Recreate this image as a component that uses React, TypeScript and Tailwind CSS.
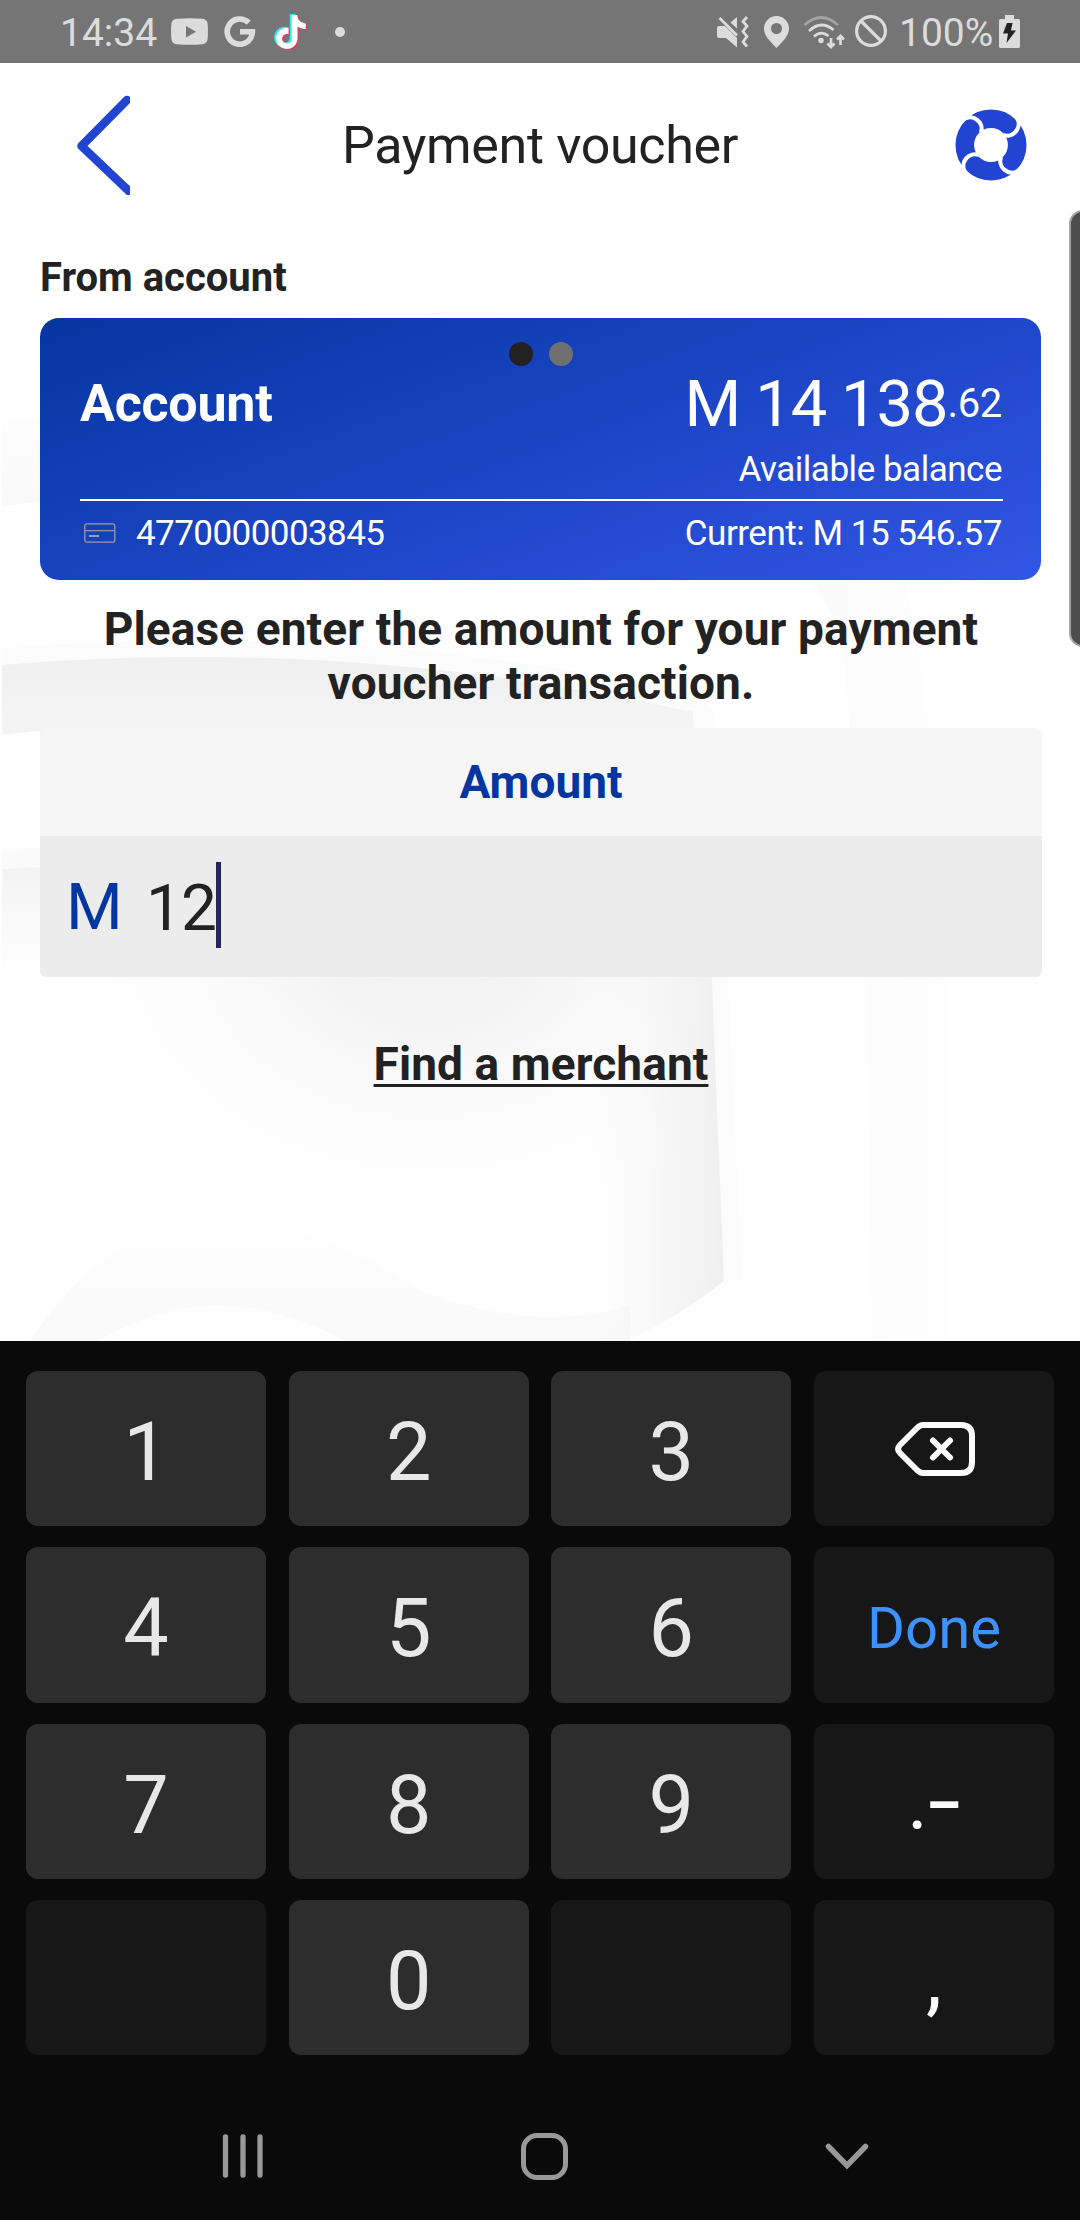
import React from "react";
import { SiTiktok } from "react-icons/si";

function StatusBar() {
  return (
    <div className="flex h-[63px] w-full items-center bg-[#757575] pl-[60px] text-[39px] leading-[63px] text-[#dcdcdc]">
      <span className="w-[111px] pt-[3px]">14:34</span>
      <svg className="h-[27px] w-[37px]" viewBox="0 0 37 27">
        <path fill="#dcdcdc" fillRule="evenodd" d="M6 .8Q18.500-.4 31 .8 36.200 1.200 36.600 6 37.300 13.500 36.600 21 36.200 25.800 31 26.200 18.500 27.400 6 26.200.8 25.800.4 21-.3 13.500.4 6 .8 1.200 6 .8ZM15 8v11.500l10-5.700Z" />
      </svg>
      <svg className="ml-4 h-[31px] w-[32px]" viewBox="0 0 32 31">
        <path fill="none" stroke="#dcdcdc" strokeWidth="5.600" d="M24.700 6.700A12.600 12.600 0 1 0 28.400 15.800H16" />
      </svg>
      <div className="relative ml-[18px] h-[36px] w-[32px]">
        <SiTiktok className="absolute left-[-2px] top-0 size-[34px] text-[#25f4ee]" />
        <SiTiktok className="absolute left-px top-[2px] size-[34px] text-[#fe2c55]" />
        <SiTiktok className="absolute left-[-0.500px] top-px size-[34px] text-white" />
      </div>
      <div className="ml-[29px] size-[10px] rounded-full bg-[#dcdcdc]" />

      <svg className="ml-[372px] h-[32px] w-[32px]" viewBox="0 0 32 32">
        <path fill="#dcdcdc" d="M2 10h6l12 12v9.500L9 22H2Q0 22 0 20v-8q0-2 2-2ZM20 1v11.500L13.500 6.500Z" />
        <path fill="none" stroke="#dcdcdc" strokeWidth="2.800" d="M2.500 2 20 19.500M30 1l-4 4.500 4 4.500-4 5.500 4 5-4 5.500 4 4.500" />
      </svg>
      <svg className="ml-[15px] h-[32px] w-[25px]" viewBox="0 0 25 32">
        <path fill="#dcdcdc" fillRule="evenodd" d="M12.500 0A12.500 12.500 0 0 0 0 12.500C0 20 6 25 12.500 32 19 25 25 20 25 12.500A12.500 12.500 0 0 0 12.500 0Zm0 7a5.500 5.500 0 1 1 0 11 5.500 5.500 0 0 1 0-11Z" />
      </svg>
      <svg className="ml-[14px] h-[34px] w-[43px]" viewBox="0 0 43 34">
        <g fill="none" stroke="#dcdcdc" strokeWidth="2.700">
          <path stroke="#a3a3a3" d="M1.500 10Q18 -5 35 10" />
          <path d="M6 16Q18 4.500 30.500 15M11 21.500q7-6.500 14.500-.5" />
          <path d="M28 23v9M24.500 28.500l3.500 3.500 3.500-3.500M37.500 30v-9M34 24.500l3.500-3.500 3.500 3.500" />
        </g>
        <circle cx="18" cy="25.500" r="2.700" fill="#dcdcdc" />
      </svg>
      <svg className="mb-[2px] ml-[8px] h-[34px] w-[34px]" viewBox="0 0 34 34">
        <circle cx="17" cy="17" r="14.400" fill="none" stroke="#dcdcdc" strokeWidth="3.200" />
        <path stroke="#dcdcdc" strokeWidth="3.200" d="m7 7 20 20" />
      </svg>
      <span className="ml-[11px] w-[100px] pt-[3px]">100%</span>
      <svg className="h-[33px] w-[21px]" viewBox="0 0 21 33">
        <path fill="#dcdcdc" d="M6 0h9v4h4.500Q21 4 21 5.500v26Q21 33 19.500 33h-18Q0 33 0 31.500v-26Q0 4 1.500 4H6Z" />
        <path fill="#222" d="M8 8h5.500l-1.500 7.500h5L7.500 28 9 18.500H4Z" />
      </svg>
    </div>
  );
}

function Backdrop() {
  return (
    <svg className="absolute inset-0 h-[1278px] w-[1080px]" viewBox="0 63 1080 1278">
      <defs>
        <linearGradient id="band" x1="0" y1="0" x2="0" y2="1">
          <stop offset="0" stopColor="#f0f0f0" />
          <stop offset="1" stopColor="#f6f6f6" />
        </linearGradient>
        <linearGradient id="column" gradientUnits="userSpaceOnUse" x1="590" y1="0" x2="724" y2="0">
          <stop offset="0" stopColor="#efefef" stopOpacity="0" />
          <stop offset="0.400" stopColor="#efefef" stopOpacity="0.300" />
          <stop offset="1" stopColor="#efefef" />
        </linearGradient>
        <radialGradient id="shade" gradientUnits="userSpaceOnUse" cx="0" cy="0" r="1" gradientTransform="translate(430 940) scale(370 285)">
          <stop offset="0" stopColor="#f1f1f1" />
          <stop offset="0.250" stopColor="#f2f2f2" stopOpacity="0.900" />
          <stop offset="0.650" stopColor="#f2f2f2" stopOpacity="0.200" />
          <stop offset="1" stopColor="#f2f2f2" stopOpacity="0" />
        </radialGradient>
        <linearGradient id="side" x1="0" y1="0" x2="1" y2="0">
          <stop offset="0" stopColor="#fbfbfb" />
          <stop offset="1" stopColor="#fefefe" />
        </linearGradient>
        <linearGradient id="left" x1="0" y1="0" x2="0" y2="1">
          <stop offset="0" stopColor="#f3f3f3" />
          <stop offset="1" stopColor="#f3f3f3" stopOpacity="0" />
        </linearGradient>
        <linearGradient id="pale" x1="0" y1="0" x2="0" y2="1">
          <stop offset="0" stopColor="#fefefe" />
          <stop offset="1" stopColor="#f9f9f9" />
        </linearGradient>
        <linearGradient id="hump" x1="0" y1="0" x2="0" y2="1">
          <stop offset="0" stopColor="#fafafa" stopOpacity="0" />
          <stop offset="1" stopColor="#f9f9f9" />
        </linearGradient>
      </defs>
      <path fill="url(#pale)" d="M2 418H60V500L2 506Z" />
      <path fill="#fefefe" d="M724 980h140v361H650l80-90Z" />
      <path fill="url(#side)" d="M810 580h95q40 200 45 400v361H872l-6-400-20-261Q842 620 810 580Z" />
      <path fill="#fcfcfc" d="M2 648q360-28 693 46l20 18 27 566-18 4-31-570Q440 650 2 666Z" />
      <path fill="url(#band)" d="M2 665Q100 657 190 657q260 0 503 55l3 60H40V731L2 735Z" />
      <path fill="url(#left)" d="M2 869l40-3v110H2Z" />
      <path fill="#fbfbfb" d="M2 851l40-4v20l-40 2Z" />
      <path fill="url(#shade)" d="M40 960H712L720 1240H40Z" />
      <path fill="url(#hump)" d="M30 1341q80-120 190-125 100 8 200 74 110 44 210 16v35Z" />
      <path fill="#fefefe" d="M98 1341Q215 1270 345 1341Z" />
      <path fill="url(#column)" d="M580 960H711L724 1281Q680 1316 627 1341H580Z" />
    </svg>
  );
}

function Header() {
  return (
    <header className="flex h-[165px] items-center justify-between pl-[77px] pr-[53px] text-[#222]">
      <svg className="mb-[2px] h-[100px] w-[53px]" viewBox="0 0 53 100">
        <path d="M50 5 4.500 51 56 100" fill="none" stroke="#2244d2" strokeWidth="8.500" strokeLinejoin="round" strokeLinecap="round" />
      </svg>
      <h1 className="pr-[5px] text-[52px] leading-none tracking-[-0.330px]">Payment voucher</h1>
      <svg className="mb-px size-[72px]" viewBox="-36 -36 72 72">
        <circle r="26.200" fill="none" stroke="#2244d2" strokeWidth="18.600" />
        <g fill="none" stroke="#fff" strokeWidth="4.200">
          <path d="M-27-26A11.700 11.700 0 0 1-10-12" />
          <path d="M-27-26A11.700 11.700 0 0 1-10-12" transform="rotate(90)" />
          <path d="M-27-26A11.700 11.700 0 0 1-10-12" transform="rotate(180)" />
          <path d="M-27-26A11.700 11.700 0 0 1-10-12" transform="rotate(270)" />
        </g>
      </svg>
    </header>
  );
}

function AccountCard() {
  return (
    <section className="relative h-[262px] w-[1001px] rounded-[19px] bg-[linear-gradient(160deg,#0436a0_0%,#1e46c8_55%,#3156e6_100%)] px-[40px] pt-[50px] text-[35px] tracking-[-0.480px] text-white">
      <div className="absolute left-[469px] top-[24px] flex gap-[16px]">
        <i className="size-[24px] rounded-full bg-[#222]" />
        <i className="size-[24px] rounded-full bg-[#707070]" />
      </div>
      <div className="flex h-[71px] w-[922px] items-center justify-between pt-px">
        <span className="text-[52px] font-bold leading-none tracking-[-0.250px]">Account</span>
        <span className="flex items-center leading-none">
          <span className="text-[65px] leading-none tracking-[-1.100px]">M 14 138</span>
          <span className="text-[40px] leading-none tracking-[-0.300px]">.62</span>
        </span>
      </div>
      <div className="h-[60px] w-[922px] pt-px text-right leading-[60px]">Available balance</div>
      <div className="flex h-[66px] w-[923px] items-center border-t-2 border-white pr-px">
        <svg className="ml-[4px] h-[20px] w-[32px]" viewBox="0 0 32 20" fill="none" stroke="#9c9ca4">
          <rect x="0.800" y="0.800" width="30" height="18.400" rx="2" strokeWidth="1.300" />
          <path d="M1 7.700h30" strokeWidth="1.200" />
          <path d="M5 13h10" strokeWidth="2" />
        </svg>
        <span className="ml-[20px] pt-[3px] tracking-[-0.560px]">4770000003845</span>
        <span className="ml-auto pt-[3px]">Current: M 15 546.57</span>
      </div>
    </section>
  );
}

function AmountField() {
  return (
    <div className="mt-[18px] w-[1002px] overflow-hidden rounded-[6px]">
      <div className="h-[108px] bg-[#f6f6f6] text-center text-[46px] font-bold leading-[108px] text-[#0436a0]">Amount</div>
      <div className="flex h-[141px] items-center bg-[#ececec] pl-[26px] text-[65px] leading-none">
        <span className="w-[80px] pt-[2px] text-[#0436a0]">M</span>
        <span className="w-[70px] whitespace-nowrap pt-[4px] text-[64px] tracking-[-1px] text-[#222]">12</span>
        <span className="mb-[3px] h-[86px] w-[5px] bg-[#29235c]" />
      </div>
    </div>
  );
}

function Key({ dark = false, children }: { dark?: boolean; children?: React.ReactNode }) {
  return (
    <div
      className={
        dark
          ? "flex items-center justify-center rounded-[12px] bg-[#171717] text-[#fafafa]"
          : "flex items-center justify-center rounded-[12px] bg-[#2d2d2d] pt-[8px] text-[81px] leading-none text-[#e8e8e8]"
      }
    >
      {children}
    </div>
  );
}

function Keyboard() {
  return (
    <div className="h-[879px] bg-[#0a0a0a] px-[26px] pt-[30px]">
      <div className="grid h-[684px] grid-cols-4 grid-rows-4 gap-x-[22.670px] gap-y-[21px]">
        <Key>1</Key>
        <Key>2</Key>
        <Key>3</Key>
        <Key dark>
          <svg className="ml-[2px] h-[56px] w-[82px]" viewBox="0 0 82 56" fill="none" stroke="#fafafa" strokeWidth="6" strokeLinecap="round">
            <path d="M29 4H67Q78 4 78 15V41Q78 52 67 52H29Q26 52 23 49L6 32Q2 28 6 24L23 7Q26 4 29 4Z" />
            <path d="m39 19.500 17 17m0-17-17 17" />
          </svg>
        </Key>
        <Key>4</Key>
        <Key>5</Key>
        <Key>6</Key>
        <Key dark>
          <span className="pt-[6px] text-[58px] leading-none text-[#3e91ff]">Done</span>
        </Key>
        <Key>7</Key>
        <Key>8</Key>
        <Key>9</Key>
        <Key dark>
          <span className="pt-[4px] text-[78px] leading-none">.</span>
          <span className="pb-[9px] font-['Noto_Sans'] text-[66px] font-semibold leading-none">–</span>
        </Key>
        <Key dark />
        <Key>0</Key>
        <Key dark />
        <Key dark>
          <span className="pt-[2px] text-[81px] leading-none">,</span>
        </Key>
      </div>
      <nav className="mt-[75px] flex h-[52px] items-center pl-[196px]">
        <svg className="h-[44px] w-[42px]" viewBox="0 0 42 44" stroke="#999" strokeWidth="5.300" strokeLinecap="round">
          <path d="M3.500 3v38M21 3v38M38 3v38" />
        </svg>
        <div className="ml-[257px] h-[47px] w-[47px] rounded-[16px] border-[5.500px] border-[#999]" />
        <svg className="ml-[257px] h-[28px] w-[44px]" viewBox="0 0 44 28" fill="none" stroke="#999" strokeWidth="5.500" strokeLinecap="round">
          <path d="m3.500 4.500 18.500 19L40.500 4.500" />
        </svg>
      </nav>
    </div>
  );
}

export default function App() {
  return (
    <div className="h-[2220px] w-[1080px] overflow-hidden bg-white font-[Roboto,sans-serif]">
      <StatusBar />
      <main className="relative h-[1278px] overflow-hidden">
        <Backdrop />
        <div className="relative">
          <Header />
          <div className="px-[40px] pt-[30px] text-[#222]">
            <h2 className="mb-[20px] text-[40px] font-bold leading-[40px]">From account</h2>
            <AccountCard />
            <p className="mt-[22px] w-[1002px] text-center text-[46px] font-bold leading-[54px] tracking-[0.110px]">
              Please enter the amount for your payment
              <br />
              voucher transaction.
            </p>
            <AmountField />
            <div className="mt-[60px] w-[1002px] text-center text-[46px] font-bold leading-[54px] tracking-[0.100px]">
              <span className="underline decoration-[2.500px] underline-offset-[4px]">Find a merchant</span>
            </div>
          </div>
        </div>
        <div className="absolute left-[1069px] top-[147px] h-[437px] w-[30px] rounded-[14px] border-2 border-[#a3a3a3] bg-[#4d4d4d]" />
      </main>
      <Keyboard />
    </div>
  );
}
